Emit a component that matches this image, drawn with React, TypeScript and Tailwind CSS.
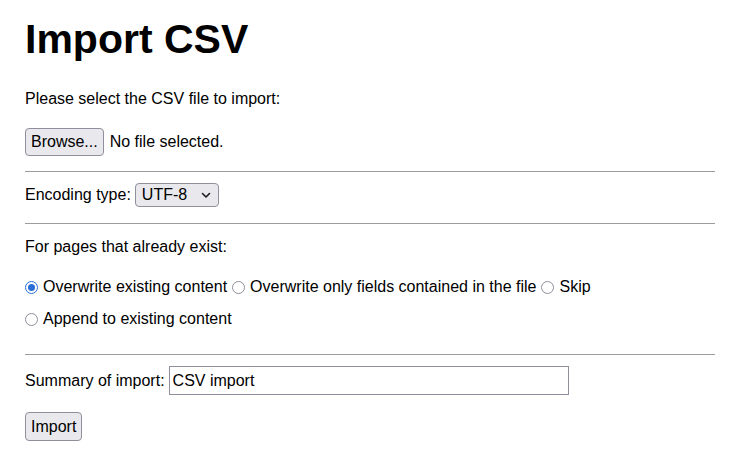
import React from "react";

const Radio = ({ checked, label }: { checked?: boolean; label: string }) => (
  <label className="flex items-center">
    {checked ? (
      <span className="w-[13px] h-[13px] rounded-full border-[1.5px] border-[#2a6fd6] bg-white flex items-center justify-center">
        <span className="w-[7px] h-[7px] rounded-full bg-[#2a6fd6]" />
      </span>
    ) : (
      <span className="w-[13px] h-[13px] rounded-full border border-[#8f8f9d] bg-white" />
    )}
    <span className="ml-[5px]">{label}</span>
  </label>
);

const Divider = ({ className }: { className: string }) => (
  <div className={`h-px bg-[#9c9c9c] ${className}`} />
);

const App = () => {
  return (
    <div
      className="w-[743px] h-[460px] bg-white text-black pl-[25px] pr-[28px] pt-[15px] text-[16px] leading-[20px]"
      style={{ fontFamily: '"Liberation Sans", Arial, sans-serif' }}
    >
      <h1 className="text-[41px] leading-[48px] font-bold">Import CSV</h1>

      <p className="mt-[26px]">Please select the CSV file to import:</p>

      <div className="mt-[19px] flex items-center">
        <button className="h-[28px] px-[5px] bg-[#e9e9ed] border border-[#8f8f9d] rounded-[4px]">
          Browse...
        </button>
        <span className="ml-[6px]">No file selected.</span>
      </div>

      <Divider className="mt-[15px]" />

      <div className="mt-[11px] flex items-center">
        <span>Encoding type:</span>
        <div className="ml-[4px] h-[24px] w-[84px] bg-[#e9e9ed] border border-[#8f8f9d] rounded-[4px] flex items-center justify-between pl-[6px] pr-[7px]">
          <span>UTF-8</span>
          <svg width="10" height="7" viewBox="0 0 10 7" fill="none">
            <path d="M1.5 1.5 L5 5 L8.5 1.5" stroke="#1b1b1b" strokeWidth="1.6" strokeLinecap="round" strokeLinejoin="round" />
          </svg>
        </div>
      </div>

      <Divider className="mt-[16px]" />

      <p className="mt-[13px]">For pages that already exist:</p>

      <div className="mt-[20px] flex items-center gap-x-[5px]">
        <Radio checked label="Overwrite existing content" />
        <Radio label="Overwrite only fields contained in the file" />
        <Radio label="Skip" />
      </div>
      <div className="mt-[12px] flex items-center">
        <Radio label="Append to existing content" />
      </div>

      <Divider className="mt-[25px]" />

      <div className="mt-[11px] flex items-center">
        <span>Summary of import:</span>
        <div className="ml-[4px] h-[29px] w-[400px] border border-[#8f8f9d] bg-white flex items-center px-[3px]">
          CSV import
        </div>
      </div>

      <button className="mt-[17px] h-[29px] px-[5px] bg-[#e9e9ed] border border-[#8f8f9d] rounded-[4px]">
        Import
      </button>
    </div>
  );
};

export default App;
